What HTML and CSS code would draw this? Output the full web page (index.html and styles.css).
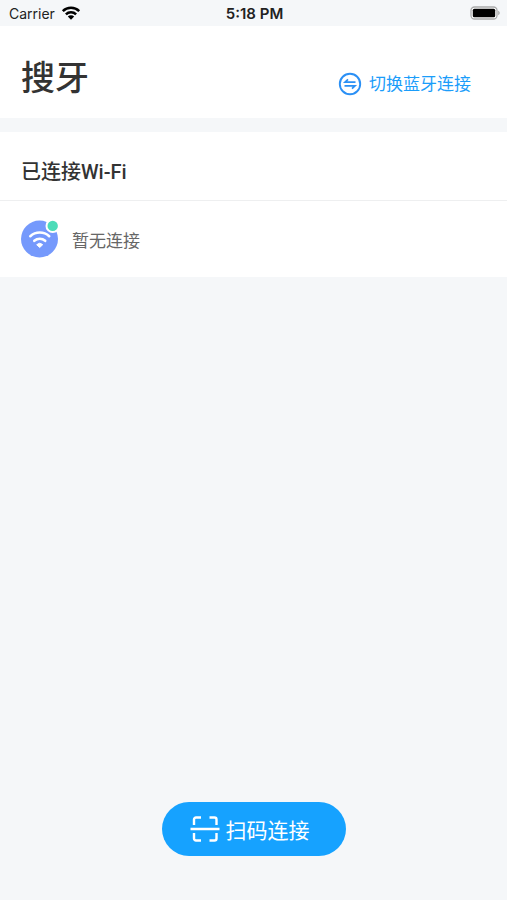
FILE: index.html
```html
<!DOCTYPE html>
<html lang="zh-CN">
<head>
<meta charset="utf-8">
<meta name="viewport" content="width=device-width, initial-scale=1">
<title>搜牙</title>
<link rel="stylesheet" href="styles.css">
</head>
<body>
<div class="screen">
  <div class="status">
    <div class="carrier">
      <span>Carrier</span>
      <svg class="signal" viewBox="0 0 18 14" aria-hidden="true">
        <path d="M.8 5.200a11.600 11.600 0 0 1 16.400 0M3.900 8.300a7.200 7.200 0 0 1 10.200 0" fill="none" stroke="#000" stroke-width="2.500"/>
        <path d="M9 13.800L5.800 10.600a4.500 4.500 0 0 1 6.400 0z"/>
      </svg>
    </div>
    <span class="clock">5:18 PM</span>
    <svg class="battery" viewBox="0 0 30 14" aria-hidden="true">
      <rect x="1" y="1" width="26" height="12" rx="3.500" fill="#fff" stroke="#a9aaab" stroke-width="1.300"/>
      <rect x="2.800" y="2.800" width="22.400" height="8.400" rx="1.500"/>
      <path d="M28.200 4.800c2 .7 2 3.700 0 4.400z" fill="#a9aaab"/>
    </svg>
  </div>

  <header class="header">
    <h1 class="title">搜牙</h1>
    <button class="switch" type="button">
      <svg class="switch-icon" viewBox="0 0 24 24" fill="none" stroke="#2b90f5" aria-hidden="true">
        <circle cx="12" cy="12" r="10.200" stroke-width="1.900"/>
        <path d="M17.500 10.200H7L10 7.300M6.500 13.800H17L14 16.700" stroke-width="1.700"/>
      </svg>
      <span>切换蓝牙连接</span>
    </button>
  </header>

  <main class="panel">
    <h2 class="panel-title">已连接Wi-Fi</h2>
    <div class="row">
      <svg class="wifi" viewBox="0 0 38 38" aria-hidden="true">
        <circle cx="18.500" cy="19" r="18.500" fill="#7599fc"/>
        <path d="M9.300 16.200a14 14 0 0 1 18.900 0M13.300 20.800a8.300 8.300 0 0 1 10.900 0" fill="none" stroke="#fff" stroke-width="2.600" stroke-linecap="round"/>
        <path d="M18.700 27.500l-3-2.800a4.300 4.300 0 0 1 6 0z" fill="#fff" stroke="#fff" stroke-linejoin="round"/>
        <circle cx="31.700" cy="5.900" r="7.200" fill="#fff"/>
        <circle cx="31.700" cy="5.900" r="5.200" fill="#4cdcb8"/>
      </svg>
      <span>暂无连接</span>
    </div>
  </main>

  <footer class="footer">
    <button class="scan" type="button">
      <svg class="scan-icon" viewBox="0 0 30 26" fill="none" stroke="#fff" stroke-width="2.400" aria-hidden="true">
        <path d="M4 9V3.500a2 2 0 0 1 2-2H11M19.500 1.500H24.500a2 2 0 0 1 2 2V9M26.500 17V22.500a2 2 0 0 1-2 2H19.500M11 24.500H6a2 2 0 0 1-2-2V17M.5 13H29.500"/>
      </svg>
      <span>扫码连接</span>
    </button>
  </footer>
</div>
</body>
</html>
```
FILE: styles.css
```css
* {
  box-sizing: border-box;
}

body {
  margin: 0;
  background: #f5f7f9;
  color: #333;
  font-family: Inter, "Noto Sans CJK SC", sans-serif;
}

h1,
h2 {
  margin: 0;
  font-weight: 500;
}

button {
  display: flex;
  align-items: center;
  margin: 0;
  border: 0;
  font-family: inherit;
  cursor: pointer;
}

svg {
  display: block;
  flex: none;
}

.screen {
  display: flex;
  flex-direction: column;
  min-height: 100vh;
}

.status {
  display: grid;
  grid-template-columns: 1fr auto 1fr;
  align-items: center;
  height: 26px;
  padding: 0 7px 0 9px;
  color: #222;
  font-size: 14px;
}

.carrier {
  display: flex;
  align-items: center;
  gap: 7px;
}

.signal {
  width: 18px;
  height: 14px;
  overflow: visible;
}

.clock {
  font-size: 15px;
  font-weight: 600;
}

.battery {
  justify-self: end;
  width: 30px;
  height: 14px;
}

.header {
  display: flex;
  align-items: center;
  justify-content: space-between;
  height: 92px;
  padding: 0 36px 0 21px;
  background: #fff;
}

.title {
  padding-top: 12px;
  font-size: 34px;
  line-height: 48px;
}

.switch {
  gap: 7px;
  padding: 24px 0 0;
  background: none;
  color: #1b9dfa;
  font-size: 17px;
  line-height: 24px;
}

.switch-icon {
  width: 24px;
  height: 24px;
}

.panel {
  margin-top: 14px;
  background: #fff;
}

.panel-title {
  padding: 26px 21px 14px;
  border-bottom: 1px solid #eeeff0;
  font-family: Roboto, "Noto Sans CJK SC", sans-serif;
  font-size: 20px;
  line-height: 28px;
}

.row {
  display: flex;
  align-items: center;
  gap: 13px;
  height: 76px;
  padding: 0 21px;
  color: #666;
  font-size: 17px;
}

.wifi {
  width: 38px;
  height: 38px;
  overflow: visible;
}

.footer {
  display: flex;
  justify-content: center;
  margin-top: auto;
  padding: 24px 0 44px;
}

.scan {
  gap: 6px;
  height: 54px;
  padding: 0 36px 0 28px;
  border-radius: 27px;
  background: #16a2ff;
  color: #fff;
  font-size: 21px;
}

.scan-icon {
  width: 30px;
  height: 26px;
}
```
